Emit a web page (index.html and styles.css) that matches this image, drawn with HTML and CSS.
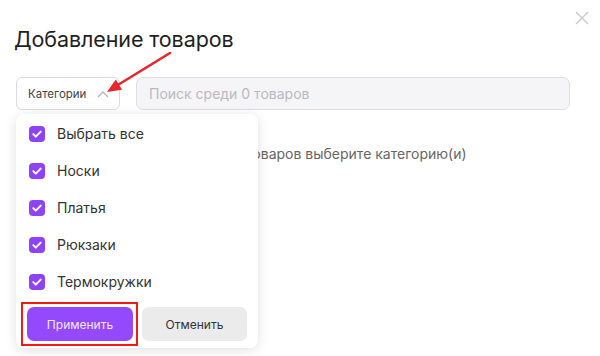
FILE: index.html
```html
<!DOCTYPE html>
<html lang="ru">
<head>
<meta charset="utf-8">
<link rel="stylesheet" href="styles.css">
</head>
<body>
<div class="modal">
  <div class="header">
    <h1 class="title">Добавление товаров</h1>
    <button class="close" aria-label="Закрыть">
      <svg width="14" height="14" viewBox="0 0 14 14"><path d="M1 1L13 13M13 1L1 13" stroke="#c9c9d1" stroke-width="1.4" fill="none"/></svg>
    </button>
  </div>
  <div class="toolbar">
    <div class="select-wrap">
      <button class="select">
        <span>Категории</span>
        <svg class="chev" width="12" height="8" viewBox="0 0 12 8"><path d="M1 7L6 2L11 7" stroke="#b5b5bd" stroke-width="1.3" fill="none"/></svg>
      </button>
      <div class="dropdown">
        <ul class="options">
          <li class="option"><span class="cb"><svg width="16" height="16" viewBox="0 0 16 16"><rect width="16" height="16" rx="4" fill="#8e43f8"/><path d="M4.3 8.1L6.8 10.6L11.7 5.6" stroke="#fff" stroke-width="2" fill="none" stroke-linecap="round" stroke-linejoin="round"/></svg></span>Выбрать все</li>
          <li class="option"><span class="cb"><svg width="16" height="16" viewBox="0 0 16 16"><rect width="16" height="16" rx="4" fill="#8e43f8"/><path d="M4.3 8.1L6.8 10.6L11.7 5.6" stroke="#fff" stroke-width="2" fill="none" stroke-linecap="round" stroke-linejoin="round"/></svg></span>Носки</li>
          <li class="option"><span class="cb"><svg width="16" height="16" viewBox="0 0 16 16"><rect width="16" height="16" rx="4" fill="#8e43f8"/><path d="M4.3 8.1L6.8 10.6L11.7 5.6" stroke="#fff" stroke-width="2" fill="none" stroke-linecap="round" stroke-linejoin="round"/></svg></span>Платья</li>
          <li class="option"><span class="cb"><svg width="16" height="16" viewBox="0 0 16 16"><rect width="16" height="16" rx="4" fill="#8e43f8"/><path d="M4.3 8.1L6.8 10.6L11.7 5.6" stroke="#fff" stroke-width="2" fill="none" stroke-linecap="round" stroke-linejoin="round"/></svg></span>Рюкзаки</li>
          <li class="option"><span class="cb"><svg width="16" height="16" viewBox="0 0 16 16"><rect width="16" height="16" rx="4" fill="#8e43f8"/><path d="M4.3 8.1L6.8 10.6L11.7 5.6" stroke="#fff" stroke-width="2" fill="none" stroke-linecap="round" stroke-linejoin="round"/></svg></span>Термокружки</li>
        </ul>
        <div class="actions">
          <button class="btn btn-apply">Применить</button>
          <button class="btn btn-cancel">Отменить</button>
        </div>
      </div>
    </div>
    <div class="search">Поиск среди 0 товаров</div>
  </div>
  <p class="empty">Для отображения товаров выберите категорию(и)</p>
</div>
<svg class="pointer" width="600" height="356" viewBox="0 0 600 356">
  <line x1="170" y1="53" x2="117" y2="85.5" stroke="#e8262b" stroke-width="2.6" stroke-linecap="round"/>
  <polygon points="107,92 115.8,79.6 122,89.8" fill="#e8262b"/>
</svg>
</body>
</html>
```

FILE: styles.css
```css
* { box-sizing: border-box; }
html, body {
  margin: 0;
  padding: 0;
  background: #fff;
  width: 600px;
  height: 356px;
  overflow: hidden;
  font-family: Inter, "Noto Sans", sans-serif;
}
.modal {
  position: relative;
  padding: 0 30px 0 16px;
}
.header {
  display: flex;
  justify-content: space-between;
  align-items: flex-start;
}
.title {
  margin: 25px 0 0 -2px;
  font-size: 21.5px;
  line-height: 28px;
  font-weight: 400;
  color: #1f1f1f;
  letter-spacing: -0.1px;
}
.close {
  border: 0;
  background: none;
  padding: 0;
  margin: 11px -19px 0 0;
  width: 14px;
  height: 14px;
  display: flex;
}
.toolbar {
  display: flex;
  gap: 16px;
  margin-top: 24px;
}
.select-wrap {
  position: relative;
}
.select {
  width: 104px;
  height: 33px;
  border: 1px solid #dcdce0;
  border-radius: 6px;
  background: #fff;
  display: flex;
  align-items: center;
  padding: 0 0 0 11px;
  font-family: inherit;
  font-size: 11.5px;
  color: #444;
}
.chev {
  margin-left: 11px;
  margin-top: 1px;
}
.search {
  flex: 1;
  height: 33px;
  border: 1px solid #dedee2;
  border-radius: 7px;
  background: #f5f5f7;
  padding: 0 12px;
  display: flex;
  align-items: center;
  font-size: 14px;
  color: #b9b9c0;
}
.dropdown {
  position: absolute;
  top: 37px;
  left: 0;
  width: 242px;
  background: #fff;
  border-radius: 8px;
  box-shadow: 0 2px 12px rgba(0, 0, 0, 0.12);
  padding: 1px 11px 7px;
  z-index: 2;
}
.options {
  list-style: none;
  margin: 0;
  padding: 0;
}
.option {
  height: 37px;
  display: flex;
  align-items: center;
  padding-left: 2px;
  font-size: 14px;
  color: #333;
}
.cb {
  display: flex;
  width: 16px;
  height: 16px;
  margin-right: 12px;
}
.actions {
  display: flex;
  gap: 9px;
  margin-top: 7px;
}
.btn {
  width: 105px;
  height: 34px;
  border: 0;
  border-radius: 7px;
  font-family: inherit;
  font-size: 12px;
}
.btn-apply {
  position: relative;
  width: 106px;
  background: #9549fc;
  color: #f1e8ff;
}
.btn-apply::after {
  content: "";
  position: absolute;
  left: -6px;
  right: -5px;
  top: -5px;
  bottom: -5px;
  border: 2px solid #ef1b1b;
}
.btn-cancel {
  background: #ebebeb;
  color: #333;
}
.empty {
  margin: 35px 0 0;
  text-align: center;
  font-size: 14px;
  color: #666;
}
.pointer {
  position: absolute;
  top: 0;
  left: 0;
  pointer-events: none;
  z-index: 5;
}
```
